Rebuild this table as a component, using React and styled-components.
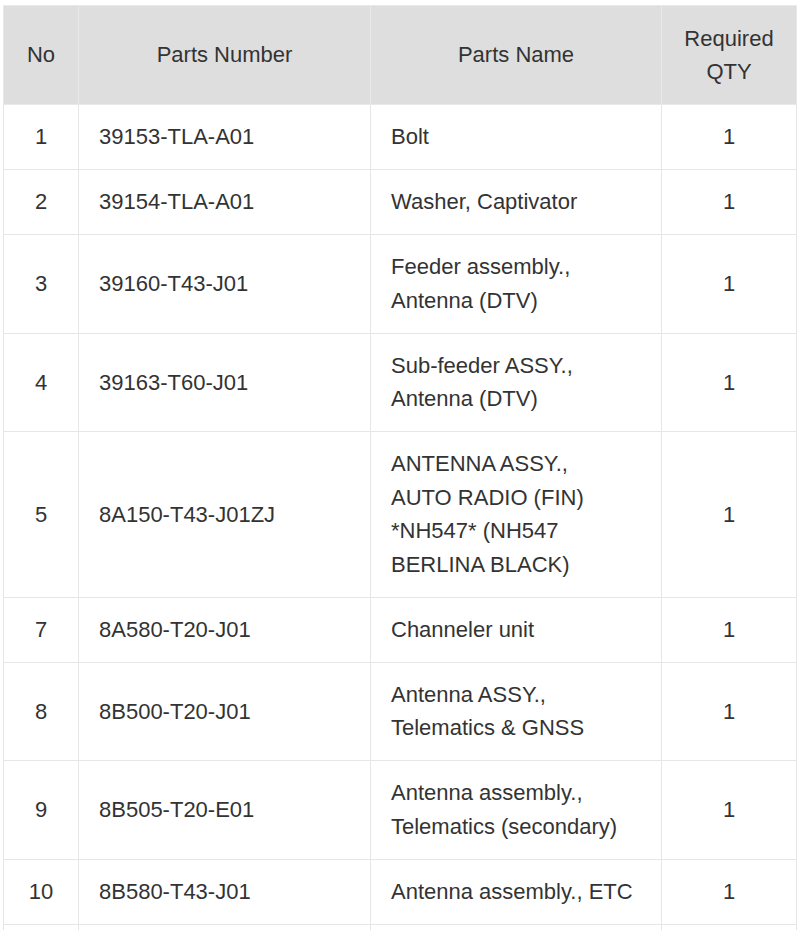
import React from "react";
import styled, { createGlobalStyle } from "styled-components";

const GlobalStyle = createGlobalStyle`
  body {
    margin: 0;
    background: #ffffff;
    font-family: "Liberation Sans", Arial, sans-serif;
  }
`;

const Page = styled.div`
  padding: 5px 6px 0 3px;
`;

const Table = styled.table`
  width: 794px;
  border-collapse: collapse;
  table-layout: fixed;
  color: #333333;
  font-size: 22px;
  line-height: 33.5px;
`;

const HeadCell = styled.th`
  box-sizing: border-box;
  background: #dedede;
  font-weight: 400;
  text-align: center;
  vertical-align: middle;
  padding: 15.5px 8px;
  border: 1px solid #e9e9e9;
  width: ${(props) => props.$width || "auto"};
`;

const Cell = styled.td`
  text-align: ${(props) => props.$align || "left"};
  vertical-align: middle;
  padding: 15.25px 20px;
  border: 1px solid #e6e6e6;
  height: 33.5px;
`;

const parts = [
  { no: 1, number: "39153-TLA-A01", name: ["Bolt"], qty: 1 },
  { no: 2, number: "39154-TLA-A01", name: ["Washer, Captivator"], qty: 1 },
  { no: 3, number: "39160-T43-J01", name: ["Feeder assembly.,", "Antenna (DTV)"], qty: 1 },
  { no: 4, number: "39163-T60-J01", name: ["Sub-feeder ASSY.,", "Antenna (DTV)"], qty: 1 },
  {
    no: 5,
    number: "8A150-T43-J01ZJ",
    name: ["ANTENNA ASSY.,", "AUTO RADIO (FIN)", "*NH547* (NH547", "BERLINA BLACK)"],
    qty: 1,
  },
  { no: 7, number: "8A580-T20-J01", name: ["Channeler unit"], qty: 1 },
  { no: 8, number: "8B500-T20-J01", name: ["Antenna ASSY.,", "Telematics & GNSS"], qty: 1 },
  { no: 9, number: "8B505-T20-E01", name: ["Antenna assembly.,", "Telematics (secondary)"], qty: 1 },
  { no: 10, number: "8B580-T43-J01", name: ["Antenna assembly., ETC"], qty: 1 },
];

const App = () => {
  return (
    <>
      <GlobalStyle />
      <Page>
        <Table>
          <thead>
            <tr>
              <HeadCell $width="75px">No</HeadCell>
              <HeadCell $width="292px">Parts Number</HeadCell>
              <HeadCell $width="291px">Parts Name</HeadCell>
              <HeadCell>
                Required
                <br />
                QTY
              </HeadCell>
            </tr>
          </thead>
          <tbody>
            {parts.map((part) => (
              <tr key={part.no}>
                <Cell $align="center">{part.no}</Cell>
                <Cell>{part.number}</Cell>
                <Cell>
                  {part.name.map((line, i) => (
                    <React.Fragment key={i}>
                      {i > 0 && <br />}
                      {line}
                    </React.Fragment>
                  ))}
                </Cell>
                <Cell $align="center">{part.qty}</Cell>
              </tr>
            ))}
            {/* next row continues below the fold */}
            <tr>
              <Cell />
              <Cell />
              <Cell />
              <Cell />
            </tr>
          </tbody>
        </Table>
      </Page>
    </>
  );
};

export default App;
